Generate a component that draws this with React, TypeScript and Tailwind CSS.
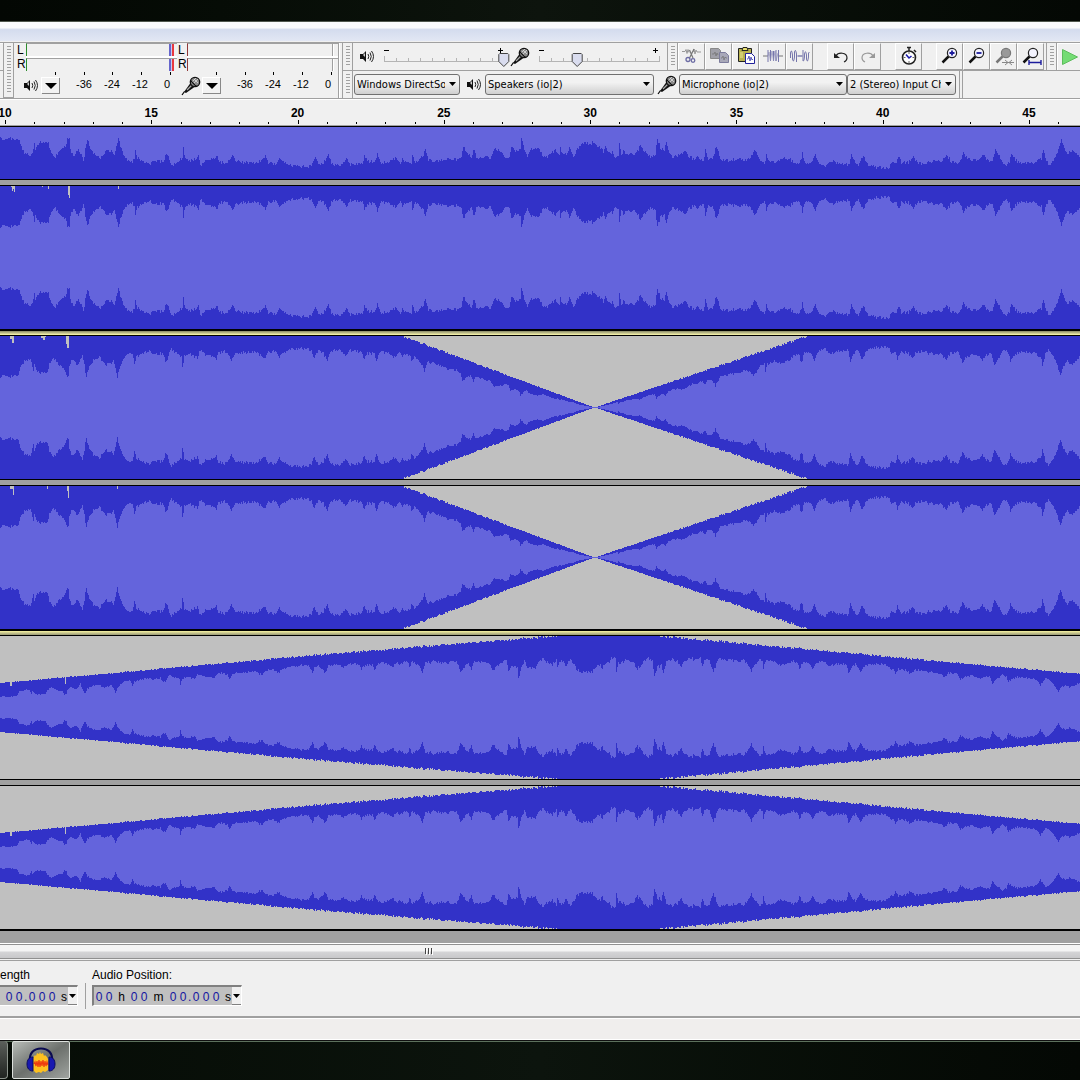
import { ReactNode } from "react";
import clsx from "clsx";

const WIDTH = 1080;
const HEIGHT = 143;
const MID = HEIGHT / 2;

// [x, distance between the channel edge and the RMS band]
const PROFILE: [number, number][] = [
	[0, 40], [19, 40], [22, 28], [29, 23], [32, 25], [34, 36], [35, 28], [38, 35],
	[40, 37], [48, 37], [50, 28], [54, 21], [60, 30], [65, 33], [67, 41], [69, 40],
	[70, 29], [73, 23], [78, 30], [81, 25], [83, 18], [85, 29], [87, 41], [90, 30],
	[95, 23], [100, 21], [104, 26], [107, 30], [109, 27], [111, 28], [114, 24],
	[117, 36], [118, 42], [120, 32], [123, 24], [127, 18], [132, 17], [134, 21],
	[135, 29], [137, 21], [142, 17], [150, 16], [156, 18], [163, 17], [166, 25],
	[168, 24], [170, 17], [172, 13], [178, 18], [182, 21], [183, 31], [185, 21],
	[190, 18], [198, 22], [200, 14], [207, 19], [214, 21], [217, 24], [219, 17],
	[225, 15], [230, 19], [232, 25], [235, 19], [240, 16], [250, 17], [258, 16],
	[264, 22], [265, 23], [268, 16], [275, 15], [280, 21], [284, 17], [290, 14],
	[300, 12], [309, 13], [312, 15], [315, 23], [317, 17], [320, 14], [324, 18],
	[328, 25], [331, 15], [340, 14], [346, 20], [350, 14], [358, 15], [362, 16],
	[364, 23], [368, 17], [375, 18], [377, 25], [380, 17], [388, 16], [395, 21],
	[400, 16], [402, 20], [408, 16], [411, 17], [412, 24], [415, 16], [420, 21],
	[423, 24], [425, 31], [428, 19], [438, 18], [450, 21], [458, 19], [461, 22],
	[463, 32], [467, 26], [471, 22], [474, 30], [476, 21], [485, 22], [490, 21],
	[495, 31], [500, 27], [505, 22], [509, 22], [511, 33], [515, 27], [520, 29],
	[521, 41], [524, 29], [527, 22], [530, 30], [538, 31], [542, 23], [546, 21],
	[550, 26], [555, 29], [559, 23], [560, 31], [562, 25], [566, 25], [569, 31],
	[573, 22], [578, 31], [583, 36], [590, 35], [593, 37], [598, 32], [603, 28],
	[605, 32], [608, 27], [612, 26], [615, 21], [618, 22], [619, 35], [621, 25],
	[623, 28], [628, 24], [635, 25], [640, 33], [645, 27], [650, 22], [655, 25],
	[657, 41], [660, 31], [664, 29], [666, 37], [669, 25], [672, 22], [680, 24],
	[684, 29], [688, 23], [694, 19], [696, 22], [700, 19], [703, 18], [705, 28],
	[708, 19], [712, 20], [716, 33], [719, 24], [721, 18], [730, 19], [741, 20],
	[746, 18], [750, 21], [754, 30], [758, 22], [762, 16], [765, 17], [766, 26],
	[768, 18], [775, 16], [783, 21], [790, 19], [795, 15], [800, 17], [802, 25],
	[805, 16], [812, 18], [815, 24], [818, 16], [825, 13], [832, 18], [840, 15],
	[849, 14], [851, 26], [854, 19], [858, 14], [863, 23], [867, 15], [875, 12],
	[882, 11], [888, 11], [892, 16], [896, 16], [898, 23], [901, 16], [908, 17],
	[913, 22], [917, 16], [922, 15], [930, 18], [940, 17], [947, 23], [951, 17],
	[959, 16], [963, 26], [967, 21], [976, 18], [983, 24], [986, 19], [992, 18],
	[995, 30], [999, 22], [1005, 13], [1009, 17], [1011, 25], [1015, 19],
	[1020, 16], [1030, 16], [1037, 18], [1041, 21], [1043, 29], [1046, 19],
	[1049, 14], [1053, 19], [1057, 27], [1061, 40], [1064, 30], [1068, 26],
	[1072, 29], [1077, 25], [1080, 21], [1090, 20],
];

type Gain = [number, number][];

const FLAT: Gain = [[0, 1], [WIDTH, 1]];
const CROSS: Gain = [[0, 1], [400, 1], [594, 0], [809, 1], [WIDTH, 1]];
const SWELL: Gain = [[0, 0.34], [300, 0.71], [560, 1], [655, 1], [WIDTH, 0.465]];

function sample(points: [number, number][], x: number) {
	for (let i = 1; i < points.length; i++) {
		const [x0, y0] = points[i - 1];
		const [x1, y1] = points[i];
		if (x <= x1) return y0 + ((y1 - y0) * (x - x0)) / (x1 - x0);
	}
	return points[points.length - 1][1];
}

function noise(n: number) {
	const s = Math.sin(n * 127.1) * 43758.5453;
	return (s - Math.floor(s)) * 2 - 1;
}

function band(half: (x: number) => number) {
	const tops = Array.from({ length: WIDTH }, (_, x) =>
		Math.max(0, Math.round(MID - half(x)))
	);
	let d = `M0 ${MID}`;
	tops.forEach((top, x) => (d += `V${top}H${x + 1}`));
	for (let x = WIDTH - 1; x >= 0; x--) d += `V${HEIGHT - tops[x]}H${x}`;
	return d + "Z";
}

function makeWave(gain: Gain, shift: number) {
	return {
		peak: band((x) => {
			const g = sample(gain, x);
			return g === 1 ? 72 : Math.max(1, g * 72 + noise(x + 9) * g * 1.3);
		}),
		rms: band((x) => {
			const g = sample(gain, x);
			return (MID - sample(PROFILE, x + shift) + noise(x) * 1.6) * g;
		}),
	};
}

const flatWave = makeWave(FLAT, 0);
const crossWave = makeWave(CROSS, 1);
const swellWave = makeWave(SWELL, 3);

type Wave = ReturnType<typeof makeWave>;

function Channel({
	wave,
	nicks,
	lower,
}: {
	wave: Wave;
	nicks?: string;
	lower?: boolean;
}) {
	return (
		<svg
			className={clsx("block w-full bg-[#c0c0c0]", lower ? "h-[52px]" : "h-[143px]")}
			viewBox={lower ? "0 91 1080 52" : "0 0 1080 143"}
			preserveAspectRatio="none"
			shapeRendering="crispEdges"
		>
			<path d={wave.peak} fill="#3232c8" />
			<path d={wave.rms} fill="#6464dc" />
			{nicks && <path d={nicks} fill="#c0c0c0" />}
		</svg>
	);
}

function ChannelGap() {
	return <div className="h-[7px] border-y border-black bg-[#a0a0a0]" />;
}

function TrackGap({ flipped }: { flipped?: boolean }) {
	return (
		<div
			className={clsx(
				"h-[7px] border-t-2 border-b border-black",
				flipped
					? "bg-linear-to-b from-[#f8f4a0] to-[#989878]"
					: "bg-linear-to-b from-[#888868] to-[#fffcb0]"
			)}
		/>
	);
}

function Speaker() {
	return (
		<svg className="h-4 w-4 shrink-0" viewBox="0 0 16 16">
			<path d="M1 5h3l3-3v11l-3-3H1z" fill="#111" />
			<path d="M4 6 6 4v4z" fill="#ccc" />
			<path
				d="M9 5q1.500 2.500 0 5M11 3.500q2.500 4 0 8M12.500 2q4 5.500 0 11"
				fill="none"
				stroke="#222"
				strokeWidth="1"
			/>
		</svg>
	);
}

function Microphone() {
	return (
		<svg className="h-5 w-5 shrink-0" viewBox="0 0 20 20">
			<path d="M1 19 3.500 15.500" stroke="#000" strokeWidth="1.200" />
			<path d="M3 16 9.500 7l4 4L5 17z" fill="#111" />
			<path d="m6 14 5-5" stroke="#aaa" strokeWidth="1.200" />
			<circle cx="14" cy="6" r="4.700" fill="#8a8a8a" stroke="#111" strokeWidth="1.300" />
			<path
				d="m11 5 4 4M13 3l4 4M12 8l5-5M10.500 6.500 15 2"
				stroke="#ddd"
				strokeWidth="0.800"
			/>
			<path d="m9.500 4.500 6 6" stroke="#111" strokeWidth="1.300" />
		</svg>
	);
}

function Grip({ tall }: { tall?: boolean }) {
	return (
		<svg
			className={clsx(
				"block w-[11px] shrink-0 border-r border-b border-l border-[#a0a0a0]",
				tall ? "h-[55px]" : "h-7"
			)}
			viewBox={tall ? "0 0 9 54" : "0 0 9 27"}
			shapeRendering="crispEdges"
		>
			<path
				d={Array.from({ length: tall ? 16 : 7 }, (_, i) => `M3 ${3.5 + i * 3}h4`).join("")}
				stroke="#a0a0a0"
			/>
		</svg>
	);
}

function MenuButton({ label }: { label: string }) {
	return (
		<button
			aria-label={label}
			className="flex h-4 w-[18px] items-center justify-center border-r border-b border-[#888] bg-[#f2f2f2] shadow-[-1px_-1px_0_#fff]"
		>
			<svg className="h-[6px] w-3" viewBox="0 0 12 6">
				<path d="M0 0h12L6 6z" fill="#000" />
			</svg>
		</button>
	);
}

function Meter({ label, recording }: { label: string; recording?: boolean }) {
	return (
		<section aria-label={label} className="w-[161px]">
			<div className="flex h-7 text-xs leading-[14px]">
				<div className="w-[10px] pl-px">
					<p>L</p>
					<p>R</p>
				</div>
				<div className="flex flex-1 flex-col gap-[2px] bg-white">
					{[0, 1].map((row) => (
						<div
							key={row}
							className={clsx(
								"flex h-[13px] justify-end border-t border-l border-t-[#a0a0a0] bg-[#f0f0f0]",
								recording ? "border-l-[#903838]" : "border-l-[#2c8c2c]"
							)}
						>
							{recording ? (
								<span className="mr-1 w-[2px] border-l border-[#a0a0a0] bg-white" />
							) : (
								<>
									<span className="w-[2px] bg-[#6666cc]" />
									<span className="w-px bg-[#c8c8ee]" />
									<span className="mr-[3px] w-[2px] bg-[#e8383e]" />
								</>
							)}
						</div>
					))}
				</div>
			</div>
			<svg
				className="ml-[10px] block h-[5px] w-[151px]"
				viewBox="0 0 151 5"
				shapeRendering="crispEdges"
			>
				<path d="M29.500 1v3M58.500 1v3M86.500 1v3M115.500 1v3M144.500 1v3" stroke="#000" />
			</svg>
			<div className="flex h-5 items-start text-[11px] leading-4">
				<span
					className={clsx(
						"flex w-[26px] shrink-0",
						recording ? "pl-1" : "pt-[2px] pl-[7px]"
					)}
				>
					{recording ? <Microphone /> : <Speaker />}
				</span>
				<span className="flex w-[28px] shrink-0 pt-[2px]">
					<MenuButton label={`${label} options`} />
				</span>
				<span className="w-7 shrink-0 text-center">-36</span>
				<span className="w-7 shrink-0 text-center">-24</span>
				<span className="w-7 shrink-0 text-center">-12</span>
				<span className="w-[26px] shrink-0 text-center">0</span>
			</div>
		</section>
	);
}

function VolumeSlider({ label, value }: { label: string; value: number }) {
	const thumb = 5 + value * 1.2;

	return (
		<label className="relative block h-full w-[130px] shrink-0">
			<svg className="block h-[27px] w-[130px]" viewBox="0 0 130 27">
				<g shapeRendering="crispEdges">
					<path d="M4 7.500h5M118 7.500h5M120.500 5v5" stroke="#000" />
					<path
						d="M4.500 13v5M16.500 15v3M28.500 15v3M40.500 15v3M52.500 15v3M64.500 15v3M76.500 15v3M88.500 15v3M100.500 15v3M112.500 15v3M124.500 13v5M4 18.500h121"
						stroke="#b4b4b4"
					/>
				</g>
				<path
					transform={`translate(${thumb} 0)`}
					d="M-4 10.500h8l1 1v7l-5 5-5-5v-7z"
					fill="#d9dcee"
					stroke="#444"
				/>
			</svg>
			<input
				type="range"
				aria-label={label}
				defaultValue={value}
				className="absolute inset-0 h-full w-full opacity-0"
			/>
		</label>
	);
}

function ToolButton({ label, children }: { label: string; children: ReactNode }) {
	return (
		<button
			aria-label={label}
			className="flex h-[27px] w-[27px] shrink-0 items-start justify-center border-t border-r border-b border-l border-t-white border-r-[#a0a0a0] border-b-[#a0a0a0] border-l-white bg-[#f0f0f0] pt-[2px]"
		>
			<svg className="h-5 w-[22px] shrink-0" viewBox="0 0 22 20" fill="none">
				{children}
			</svg>
		</button>
	);
}

function Lens({ mark, muted }: { mark?: string; muted?: boolean }) {
	return (
		<>
			<path d="m9.500 10.500-6 6" stroke={muted ? "#777" : "#111"} strokeWidth="2.500" />
			<circle
				cx="13"
				cy="7"
				r="4.600"
				fill={muted ? "#999" : "#f4f4ff"}
				stroke={muted ? "#777" : "#222"}
				strokeWidth="1.200"
			/>
			{mark && <path d={mark} stroke="#1c1c9c" strokeWidth="1.800" />}
		</>
	);
}

function EditTools() {
	return (
		<>
			<ToolButton label="Cut">
				<path
					d="M1 5.500h3l1-2 1 4 1-4 1 3M12 6l1-3 1 5 1-4 1 2h4"
					stroke="#999"
				/>
				<path d="M13 3 8.500 12M8.500 4l3.500 8" stroke="#777" strokeWidth="1.200" />
				<circle cx="7" cy="13.500" r="2" stroke="#6c6ca4" strokeWidth="1.300" />
				<circle cx="12" cy="14.500" r="1.800" stroke="#6c6ca4" strokeWidth="1.300" />
			</ToolButton>
			<ToolButton label="Copy">
				<path d="M2.500 2.500h8l2 2v8h-10z" fill="#a0a0a8" stroke="#888" />
				<path d="M4 8h2l1-2 1 4 1-3 1 2" stroke="#777" strokeWidth="0.800" />
				<path d="M11.500 6.500h6l3 3v7h-9z" fill="#a8a8b8" stroke="#7c7c9c" />
				<path d="M13 12h1l1-2 1 4 1-3 1 1h1" stroke="#777" strokeWidth="0.800" />
			</ToolButton>
			<ToolButton label="Paste">
				<path d="M3.500 2.500h13v13h-13z" fill="#b8b250" stroke="#222" />
				<path d="M7 4.500h6l-1-3H8z" fill="#e8e070" stroke="#222" />
				<path d="M5 7h3M5 9h3M5 11h3" stroke="#ece890" />
				<path d="M10.500 7.500h6l3 3v7h-9z" fill="#fff" stroke="#22229c" />
				<path d="M12 13h1l1-3 1 5 1-4 1 3 1-1" stroke="#3c3cb0" strokeWidth="0.800" />
			</ToolButton>
			<ToolButton label="Trim">
				<path d="M1 10h5M17 10h4" stroke="#777" />
				<path
					d="M6 4v12M16.500 4v12M8.500 4v11M11.500 5v10M14 4v11"
					stroke="#7676ac"
				/>
				<path d="m6 10 1-4 1.500 9L10 5l1.500 10L13 5l1 10 2-8" stroke="#8c8cb8" strokeWidth="0.700" />
			</ToolButton>
			<ToolButton label="Silence">
				<path d="M8.500 10h5" stroke="#7676ac" strokeWidth="1.400" />
				<path
					d="M1.500 12V7q1-5 2 2v4q1 5 2-2V6q1-4 2 2v8M14 4v11q1 1 1.500-4V8q1-5 2 1v4q1 5 2-2V7l1-1"
					stroke="#7676ac"
				/>
			</ToolButton>
			<span className="w-[14px] shrink-0" />
			<ToolButton label="Undo">
				<path d="M6 10c2-4 11-4 11 2 0 2-1 3-3 4" stroke="#222" strokeWidth="1.200" />
				<path d="M4 7v5h6z" fill="#222" />
			</ToolButton>
			<ToolButton label="Redo">
				<path d="M16 10C14 6 5 6 5 12c0 2 1 3 3 4" stroke="#999" strokeWidth="1.200" />
				<path d="M18 7v5h-6z" fill="#999" />
			</ToolButton>
			<span className="w-[14px] shrink-0" />
			<ToolButton label="Sync-Lock Tracks">
				<path d="M9 1.500h4M11 1v4M16 4l2 2" stroke="#222" strokeWidth="1.500" />
				<circle cx="11" cy="11.500" r="6.500" fill="#fff" stroke="#222" strokeWidth="1.600" />
				<path d="M11 6v2M11 15v2M5.500 11.500h2M14.500 11.500h2" stroke="#666" />
				<path d="m8 8.500 3 3.500 2.500-2" stroke="#1c1cac" strokeWidth="1.600" />
			</ToolButton>
			<span className="w-[14px] shrink-0" />
			<ToolButton label="Zoom In">
				<Lens mark="M10.500 7h5M13 4.500v5" />
			</ToolButton>
			<ToolButton label="Zoom Out">
				<Lens mark="M10.500 7h5" />
			</ToolButton>
			<ToolButton label="Fit Selection">
				<Lens muted />
				<path d="M9 16.500h12M12 14l3 2.500-3 2.500M19 14l-3 2.500 3 2.500" stroke="#888" />
			</ToolButton>
			<ToolButton label="Fit Project">
				<Lens />
				<path d="M9 14v5M21 14v5M9 16.500h12" stroke="#1c1c9c" strokeWidth="1.400" />
			</ToolButton>
		</>
	);
}

function DeviceSelect({
	label,
	value,
	className,
}: {
	label: string;
	value: string;
	className: string;
}) {
	return (
		<span className={clsx("relative h-[21px] shrink-0", className)}>
			<select
				aria-label={label}
				className="block h-full w-full appearance-none overflow-hidden rounded-[3px] border border-[#707070] bg-linear-to-b from-[#f2f2f2] from-40% to-[#d0d0d0] pr-[14px] pl-[2px] font-['DejaVu_Sans_Condensed','Noto_Sans',sans-serif] text-[11px] leading-[18px] text-black"
			>
				<option>{value}</option>
			</select>
			<svg
				className="pointer-events-none absolute top-2 right-1 h-1 w-[7px]"
				viewBox="0 0 7 4"
			>
				<path d="M0 0h7L3.500 4z" fill="#000" />
			</svg>
		</span>
	);
}

function Toolbars() {
	return (
		<header className="flex h-[57px] border-t border-b border-[#a0a0a0] bg-[#f0f0f0]">
			<div className="w-[3px] shrink-0 border-t border-[#fafafa]">
				<div className="h-[27px] border-b border-[#a0a0a0]" />
			</div>
			<Grip tall />
			<div className="flex w-[325px] shrink-0 border-r border-[#a0a0a0] pl-[2px]">
				<Meter label="Playback level" />
				<Meter label="Recording level" recording />
			</div>
			<div className="w-[3px] shrink-0 border-l border-white" />
			<div className="min-w-0 flex-1 overflow-hidden">
				<div className="flex h-7 border-b border-[#a0a0a0]">
					<Grip />
					<div className="flex w-[314px] shrink-0 items-center pl-[6px]">
						<Speaker />
						<span className="w-[5px] shrink-0" />
						<VolumeSlider label="Output volume" value={99} />
						<Microphone />
						<span className="w-[5px] shrink-0" />
						<VolumeSlider label="Input volume" value={31} />
					</div>
					<Grip />
					<EditTools />
					<span className="w-[2px] shrink-0" />
					<Grip />
					<button
						aria-label="Play"
						className="flex w-12 shrink-0 items-center border-t border-l border-white pl-1"
					>
						<svg className="h-4 w-4" viewBox="0 0 16 16">
							<path d="M.5.5v15l15-7.500z" fill="#74dc74" stroke="#5cbc5c" />
						</svg>
					</button>
				</div>
				<div className="flex h-[27px]">
					<Grip />
					<div className="flex w-[607px] shrink-0 items-center border-r border-[#a0a0a0] pl-px">
						<DeviceSelect
							label="Audio host"
							value="Windows DirectSound"
							className="w-[106px]"
						/>
						<span className="w-[25px] shrink-0 pl-[6px]">
							<Speaker />
						</span>
						<DeviceSelect
							label="Output device"
							value="Speakers (io|2)"
							className="w-[169px]"
						/>
						<span className="w-[25px] shrink-0 pl-[3px]">
							<Microphone />
						</span>
						<DeviceSelect
							label="Input device"
							value="Microphone (io|2)"
							className="w-[168px]"
						/>
						<DeviceSelect
							label="Input channels"
							value="2 (Stereo) Input Channels"
							className="w-[109px]"
						/>
					</div>
					<div className="w-[3px] border-r border-[#a0a0a0]" />
				</div>
			</div>
		</header>
	);
}

function Ruler() {
	const ticks = Array.from({ length: 37 }, (_, i) => {
		const x = Math.round(5 + (i * 1024) / 35) + 0.5;
		return `M${x} ${i % 5 === 0 ? 0 : 2}V4`;
	});

	return (
		<div className="h-7 border-t border-b border-t-white border-b-black bg-[#f0f0f0]">
			<div className="flex h-5 justify-between pr-[51px] pl-[5px] text-xs leading-[26px] font-bold">
				{[10, 15, 20, 25, 30, 35, 40, 45].map((second) => (
					<span key={second} className="flex w-0 justify-center">
						{second}
					</span>
				))}
			</div>
			<svg
				className="block h-[5px] w-full"
				viewBox="0 0 1080 5"
				preserveAspectRatio="none"
				shapeRendering="crispEdges"
			>
				<path d={ticks.join("")} stroke="#000" />
			</svg>
			<div className="h-px bg-[#a0a0a0]" />
		</div>
	);
}

function Digits({ children }: { children: string }) {
	return (
		<>
			{children.split("").map((digit, i) => (
				<span
					key={i}
					className={clsx("text-center text-[#1414a0]", digit === "." ? "w-[3px]" : "w-[10px]")}
				>
					{digit}
				</span>
			))}
		</>
	);
}

function TimeField({ label, short }: { label: string; short?: boolean }) {
	return (
		<div
			role="group"
			aria-label={label}
			className={clsx(
				"flex h-[21px] border-t-2 border-r border-b border-t-[#808080] border-r-white border-b-white bg-[#c0c0c0] text-xs leading-[20px]",
				short ? "w-[78px] pl-1" : "w-[150px] border-l-2 border-l-[#808080]"
			)}
		>
			{!short && (
				<>
					<Digits>00</Digits>
					<span className="w-[15px] text-center">h</span>
					<Digits>00</Digits>
					<span className="w-[19px] text-center">m</span>
				</>
			)}
			<Digits>00.000</Digits>
			<span className="w-[10px] text-right">s</span>
			<button
				aria-label={`${label} format`}
				className="ml-auto flex h-[18px] w-[9px] items-center justify-center border-b border-[#808080] bg-[#f0f0f0]"
			>
				<svg className="h-1 w-[7px]" viewBox="0 0 7 4">
					<path d="M0 0h7L3.500 4z" fill="#000" />
				</svg>
			</button>
		</div>
	);
}

function SelectionBar() {
	return (
		<div className="flex h-[57px] border-b-2 border-[#a0a0a0] bg-[#f0f0f0] pt-[5px] text-xs">
			<div className="w-[78px] shrink-0">
				<p className="leading-[19px]">ength</p>
				<TimeField label="Length" short />
			</div>
			<div className="mt-[17px] mr-[6px] ml-[7px] h-[26px] w-px bg-[#a0a0a0]" />
			<div>
				<p className="leading-[19px]">Audio Position:</p>
				<TimeField label="Audio Position" />
			</div>
		</div>
	);
}

function Taskbar() {
	return (
		<footer className="flex h-10 border-t border-[#111] bg-linear-to-r from-[#060c06] via-[#0c140d] to-[#040804] shadow-[inset_0_1px_0_#5c705c]">
			<div className="h-[38px] w-2 rounded-r-sm border-r border-b border-[#8c948c] bg-linear-to-b from-[#5c605c] to-[#202420]" />
			<button
				aria-label="Audacity"
				className="ml-1 flex h-[38px] w-[58px] items-center justify-center rounded-[2px] border border-[#dce0dc] bg-linear-to-br from-[#b8bcb8] via-[#6c706c] to-[#a0a4a0]"
			>
				<svg className="h-7 w-[30px]" viewBox="0 0 30 28">
					<path
						d="M4 15C3 7 8 2.500 15 2.500S27 7 26 15"
						fill="none"
						stroke="#0a0a50"
						strokeWidth="2.200"
					/>
					<path
						d="M7 12l2-3 1 1 1-3 2 1 1-2 1 2 2-1 1 3 1-1 2 2 1 2v11l-3 2-2-1-2 2-2-1-3 1-2-2-3-1z"
						fill="#fcc020"
					/>
					<path
						d="m8 18 1-2 1 4 1-5 1 6 1-7 1 7 1-6 1 5 1-6 1 7 1-6 1 5 1-4 1 3"
						fill="none"
						stroke="#ec3c10"
						strokeWidth="1.200"
					/>
					<path d="M7 11c-4 0-6 3-6 7s2 7 6 7z" fill="#1818b0" stroke="#0a0a60" />
					<path d="M23 11c4 0 6 3 6 7s-2 7-6 7z" fill="#1818b0" stroke="#0a0a60" />
				</svg>
			</button>
		</footer>
	);
}

export default function App() {
	return (
		<div className="flex min-h-screen flex-col overflow-hidden bg-[#f0f0f0] font-['Liberation_Sans',Arial,sans-serif] text-black">
			<div className="h-[22px] border-b border-[#50584f] bg-linear-to-r from-[#030703] via-[#0d140d] to-[#040804]" />
			<div className="h-5 border-b border-[#f0f0f0] bg-linear-to-b from-[#fafbfd] from-30% via-[#d4dcee] via-40% to-[#e2e7f4]" />
			<Toolbars />
			<Ruler />
			<main>
				<Channel wave={flatWave} lower />
				<ChannelGap />
				<Channel
					wave={flatWave}
					nicks="M11 0h4v6h-1V3h-1v2h-1V1h-1zM42 0h1v1h-1zM48 0h1v3h-1zM68 0h2v12h-1V9h-1zM118 0h1v3h-1z"
				/>
				<TrackGap />
				<Channel
					wave={crossWave}
					nicks="M10 0h4v7h-2V3h-2zM41 0h5v1h-1v3h-2V2h-2zM66 0h3v12h-2V8h-1z"
				/>
				<ChannelGap />
				<Channel
					wave={crossWave}
					nicks="M10 0h4v9h-1V3h-3zM47 0h1v3h-1zM67 0h2v12h-1V5h-1zM117 0h1v3h-1z"
				/>
				<TrackGap flipped />
				<Channel wave={swellWave} nicks="M10 45h2v5h-2zM65 40h1v8h-1z" />
				<ChannelGap />
				<Channel wave={swellWave} nicks="M10 45h2v5h-2zM65 40h1v8h-1z" />
				<div className="h-[14px] border-t-2 border-black bg-[#a0a0a0]" />
			</main>
			<div className="h-[18px] border-t border-b border-t-white border-b-[#a0a0a0]">
				<div className="flex h-[15px] items-center border-t border-b border-[#909090] bg-linear-to-b from-[#f4f4f4] from-45% via-[#d4d4d6] via-55% to-[#c8c8ca] pl-[424px]">
					<svg className="h-[7px] w-[9px]" viewBox="0 0 9 7" shapeRendering="crispEdges">
						<path d="M1.500 0v6M4.500 0v6M7.500 0v6" stroke="#444" />
						<path d="M2.500 1v6M5.500 1v6M8.500 1v6" stroke="#fff" />
					</svg>
				</div>
			</div>
			<SelectionBar />
			<div className="h-[22px] border-t border-b border-white bg-[#f0eeed]" />
			<Taskbar />
		</div>
	);
}
